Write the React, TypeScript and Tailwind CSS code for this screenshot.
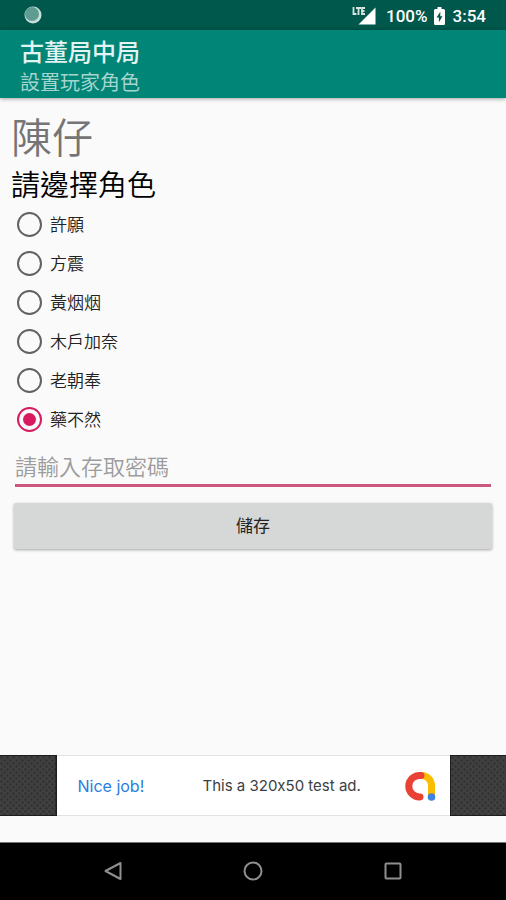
import { useState } from "react";

const ROLES = ["許願", "方震", "黃烟烟", "木戶加奈", "老朝奉", "藥不然"];

function StatusBar() {
  return (
    <div className="flex h-[30px] items-center justify-between bg-[#00574b] pr-5 pl-6 text-white">
      <svg className="size-[18px]" viewBox="0 0 18 18" aria-hidden="true">
        <circle cx="9" cy="9" r="8.5" fill="#c9dfdb" />
        <circle cx="8" cy="8" r="7" fill="#5f9c92" />
      </svg>
      <div className="flex items-center pt-px text-[17px] leading-5 font-medium">
        <svg className="mr-2.5 h-[18px] w-6" viewBox="0 0 24 18" aria-hidden="true">
          <path d="M23.5 0.5V17.5H6.5Z" fill="#fff" />
          <path
            d="M1.5 0V7H4.5M4 1H9M6.5 1V8M13 1H10V7H13M10 4H12.5"
            fill="none"
            stroke="#00574b"
            strokeWidth="3.4"
          />
          <path
            d="M1.5 0V7H4.5M4 1H9M6.5 1V8M13 1H10V7H13M10 4H12.5"
            fill="none"
            stroke="#d5e5e2"
            strokeWidth="1.8"
          />
        </svg>
        <span>100%</span>
        <svg className="mr-2 ml-1.5 h-[18px] w-[11px]" viewBox="0 0 11 18" aria-hidden="true">
          <path
            d="M3.5 0h4v2H9.5a1.5 1.5 0 0 1 1.5 1.5V16.5a1.5 1.5 0 0 1-1.5 1.5H1.5A1.5 1.5 0 0 1 0 16.5V3.5A1.5 1.5 0 0 1 1.5 2h2Z"
            fill="#fff"
          />
          <path d="M6.3 4.8 2.5 10.5H4.9V15.2L8.5 9.3H6.3Z" fill="#00574b" />
        </svg>
        <span>3:54</span>
      </div>
    </div>
  );
}

function AdPattern({ id }: { id: string }) {
  return (
    <svg className="h-full w-full" aria-hidden="true">
      <defs>
        <pattern id={id} width="6" height="6" patternUnits="userSpaceOnUse">
          <rect width="6" height="6" fill="#404040" />
          <circle cx="1.5" cy="1.5" r="1.2" fill="#303030" />
          <circle cx="4.5" cy="4.5" r="1.2" fill="#303030" />
        </pattern>
      </defs>
      <rect width="100%" height="100%" fill={`url(#${id})`} />
    </svg>
  );
}

function AdBanner() {
  return (
    <div className="flex h-[61px] bg-[#1c1c1c]">
      <div className="min-w-0 flex-1 py-px pr-px">
        <AdPattern id="dots-left" />
      </div>
      <div className="flex w-[393px] items-center border-y border-[#dfe3e5] bg-white pr-3.5 pl-[21px] font-['Inter','Roboto',sans-serif] text-[15px] leading-5 [font-variant-ligatures:no-contextual]">
        <a href="#ad" className="w-[125px] text-[16px] text-[#2a7de1]">
          Nice job!
        </a>
        <span className="flex-1 whitespace-nowrap text-[#3c4043]">This a 320x50 test ad.</span>
        <svg className="size-8" viewBox="0 0 32 32" aria-label="AdMob">
          <path d="M17 5.5A10 10 0 0 1 27.5 15.5V26" fill="none" stroke="#fbbc04" strokeWidth="7" />
          <path
            d="M17 5.5A10.8 10.8 0 1 0 16 27"
            fill="none"
            stroke="#e94235"
            strokeWidth="7"
            strokeLinecap="round"
          />
          <circle cx="27.5" cy="27" r="3.8" fill="#3f83e0" />
        </svg>
      </div>
      <div className="min-w-0 flex-1 py-px pl-px">
        <AdPattern id="dots-right" />
      </div>
    </div>
  );
}

function NavBar() {
  return (
    <nav className="flex h-[58px] items-center justify-center gap-[116px] border-t border-[#777] bg-black pb-0.5">
      <button type="button" aria-label="Back" className="size-6">
        <svg viewBox="0 0 24 24" fill="none" stroke="#8f8f8f" strokeWidth="2" strokeLinejoin="round">
          <path d="M19.5 4V20L4.5 12Z" />
        </svg>
      </button>
      <button type="button" aria-label="Home" className="size-6">
        <svg viewBox="0 0 24 24" fill="none" stroke="#8f8f8f" strokeWidth="2">
          <circle cx="12" cy="12" r="8.5" />
        </svg>
      </button>
      <button type="button" aria-label="Recent apps" className="size-6">
        <svg viewBox="0 0 24 24" fill="none" stroke="#8f8f8f" strokeWidth="2">
          <rect x="4.5" y="4.5" width="15" height="15" rx="1" />
        </svg>
      </button>
    </nav>
  );
}

export default function App() {
  const [role, setRole] = useState("藥不然");
  const [password, setPassword] = useState("");

  return (
    <div
      lang="zh-Hant"
      className="flex min-h-screen flex-col bg-[#fafafa] font-['Roboto','Noto_Sans_CJK_TC',sans-serif]"
    >
      <StatusBar />
      <header className="bg-[#008577] px-5 pt-[7px] pb-px shadow-[0_1px_4px_rgba(0,0,0,0.35)]">
        <h1 className="text-[24px] leading-8 font-medium text-[#e3f3f1]">古董局中局</h1>
        <p className="text-[20px] leading-7 text-[#a6d5cf]">設置玩家角色</p>
      </header>
      <main className="flex flex-1 flex-col px-[11px]">
        <h2 className="mt-4 text-[41px] leading-[50px] font-[350] text-[#757575]">陳仔</h2>
        <fieldset>
          <legend className="pt-[3px] text-[29px] leading-[38px] font-[350] text-black">請邊擇角色</legend>
          {ROLES.map((name) => (
            <label
              key={name}
              className="flex h-[39px] items-center gap-2 pl-1.5 text-[17px] font-[350] text-[#222]"
            >
              <input
                type="radio"
                name="role"
                value={name}
                checked={role === name}
                onChange={() => setRole(name)}
                className="grid size-[25px] appearance-none place-content-center rounded-full border-2 border-[#626262] before:size-[13px] before:rounded-full checked:border-[#d81b60] checked:before:bg-[#d81b60]"
              />
              <span className="pt-0.5">{name}</span>
            </label>
          ))}
        </fieldset>
        <input
          type="text"
          aria-label="請輸入存取密碼"
          placeholder="請輸入存取密碼"
          value={password}
          onChange={(e) => setPassword(e.target.value)}
          className="mx-1 mt-3 h-9 border-b-3 border-[#cb5780] bg-transparent text-[22px] font-[350] text-black outline-none placeholder:text-[#9c9c9c]"
        />
        <button
          type="button"
          className="mx-[3px] mt-4 h-[46px] rounded-xs bg-[#d6d7d7] pt-0.5 text-[17px] text-[#222] shadow-[0_1px_3px_rgba(0,0,0,0.35)]"
        >
          儲存
        </button>
      </main>
      <footer>
        <AdBanner />
        <div className="h-[26px]" />
        <NavBar />
      </footer>
    </div>
  );
}
